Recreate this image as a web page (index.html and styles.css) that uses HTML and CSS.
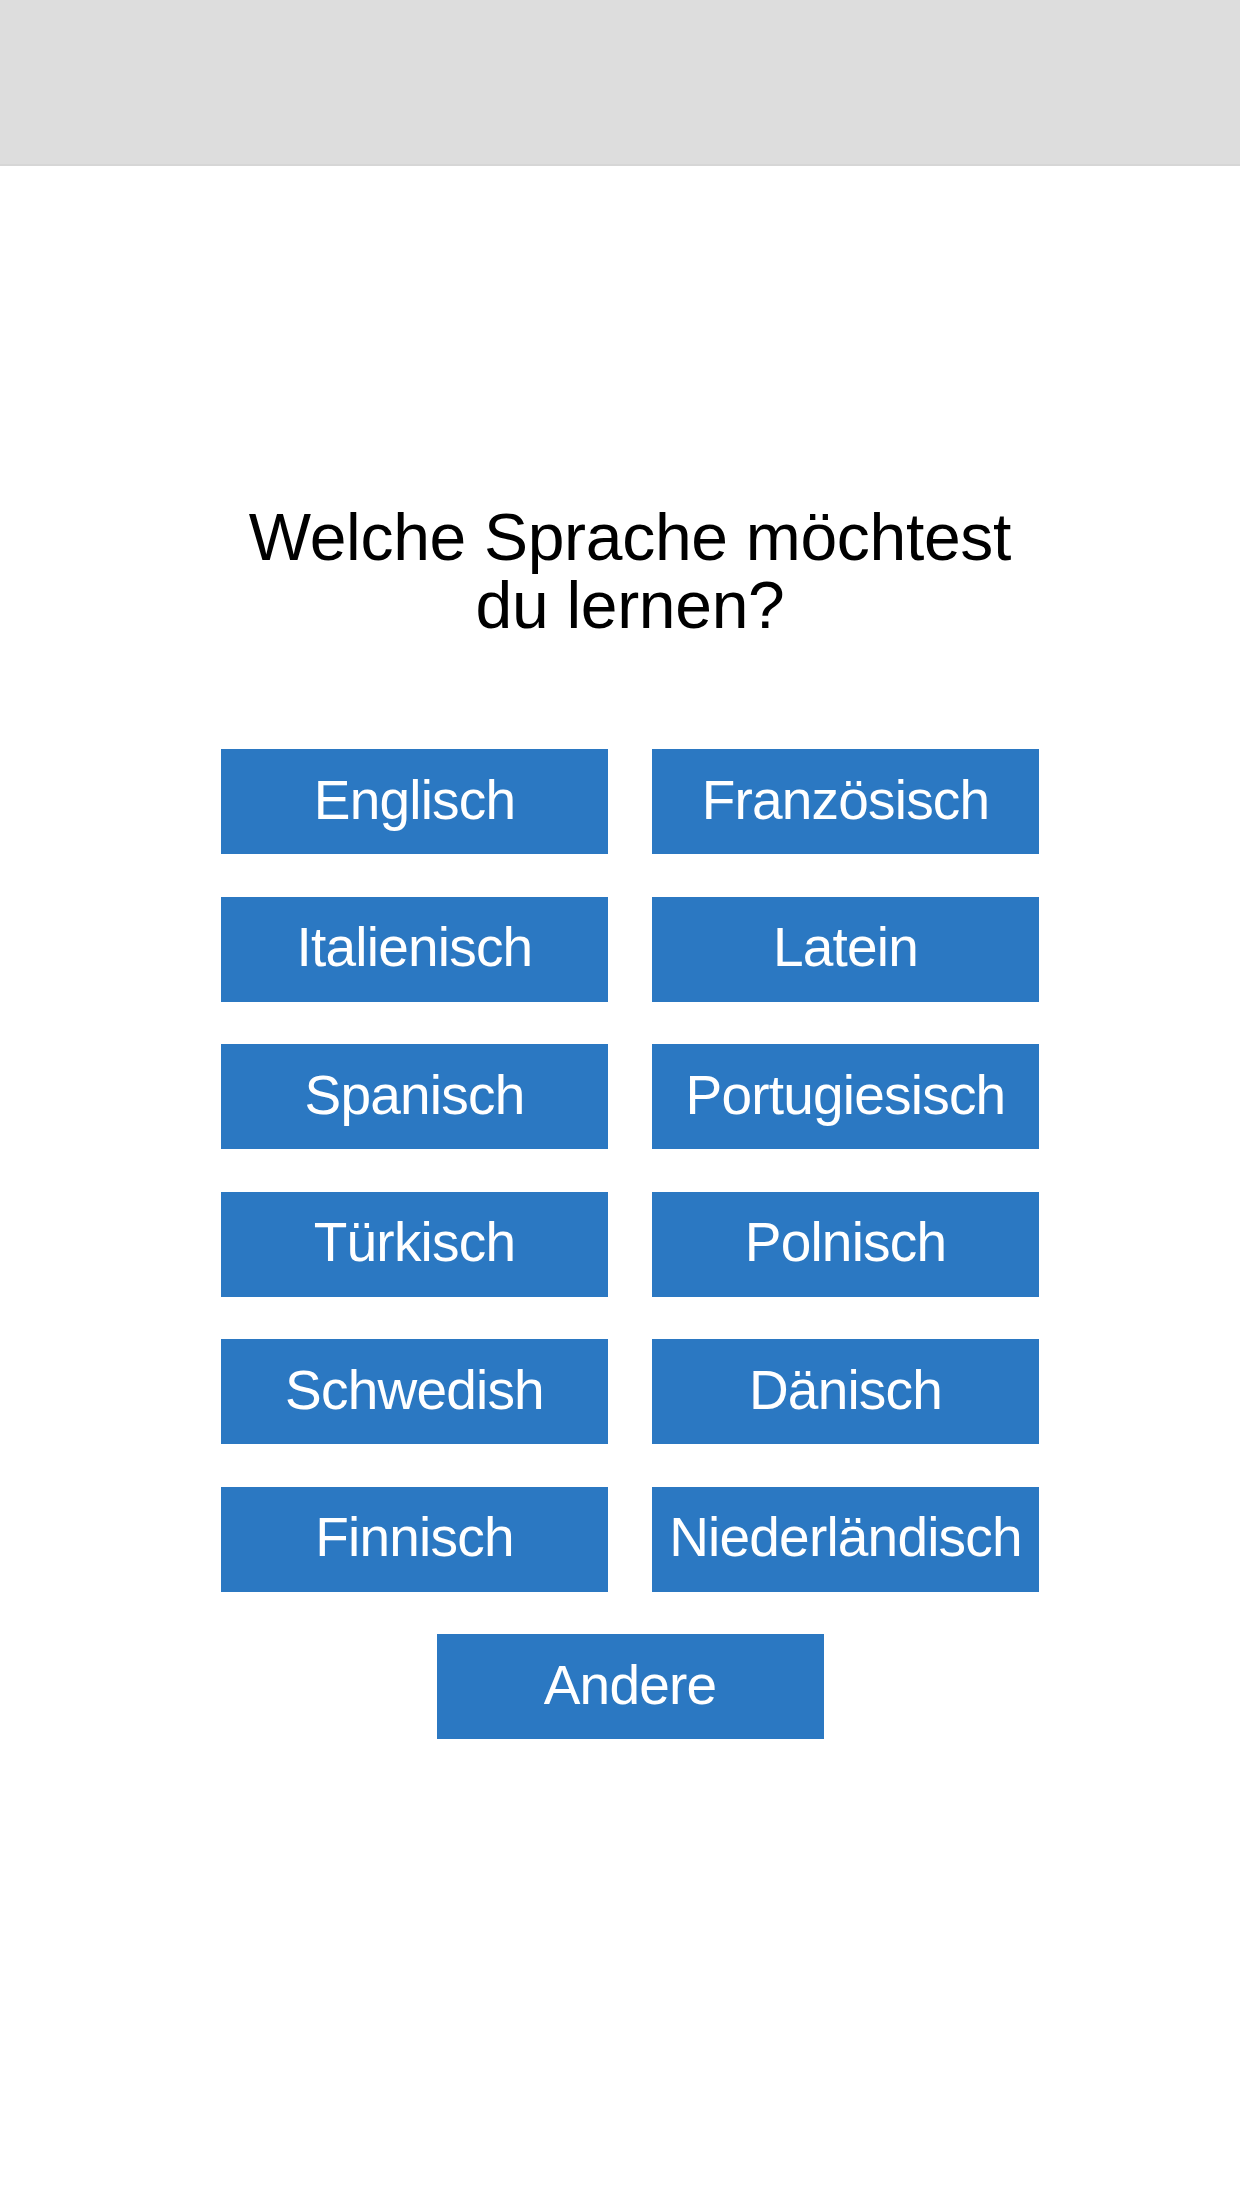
FILE: index.html
```html
<!DOCTYPE html>
<html lang="de">
<head>
<meta charset="utf-8">
<title>Sprache wählen</title>
<link rel="stylesheet" href="styles.css">
</head>
<body>
<header class="topbar"></header>
<main class="content">
  <h1 class="title">Welche Sprache möchtest<br>du lernen?</h1>
  <div class="choices">
    <button class="choice">Englisch</button>
    <button class="choice">Französisch</button>
    <button class="choice">Italienisch</button>
    <button class="choice">Latein</button>
    <button class="choice">Spanisch</button>
    <button class="choice">Portugiesisch</button>
    <button class="choice">Türkisch</button>
    <button class="choice">Polnisch</button>
    <button class="choice">Schwedish</button>
    <button class="choice">Dänisch</button>
    <button class="choice">Finnisch</button>
    <button class="choice">Niederländisch</button>
    <button class="choice choice-wide">Andere</button>
  </div>
</main>
</body>
</html>
```
FILE: styles.css
```css
html, body {
  margin: 0;
  padding: 0;
  background: #ffffff;
}
body {
  width: 1242px;
  min-height: 2208px;
  font-family: "Liberation Sans", Arial, sans-serif;
}
.topbar {
  height: 164px;
  background: #dddddd;
  border-bottom: 2px solid #d6d6d6;
  margin-right: 2px;
}
.content {
  display: flex;
  flex-direction: column;
  align-items: center;
  padding-left: 18px;
  padding-top: 337px;
}
.title {
  margin: 0;
  font-weight: normal;
  font-size: 66px;
  line-height: 68px;
  color: #000000;
  text-align: center;
  letter-spacing: -0.3px;
}
.choices {
  margin-top: 110px;
  display: grid;
  grid-template-columns: 387px 387px;
  grid-auto-rows: 105px;
  column-gap: 44px;
  row-gap: 42.5px;
}
.choice {
  margin: 0;
  padding: 0;
  border: none;
  background: #2b78c2;
  color: #ffffff;
  font-family: "Liberation Sans", Arial, sans-serif;
  font-size: 55px;
  letter-spacing: -0.8px;
  display: flex;
  align-items: center;
  justify-content: center;
  padding-bottom: 4px;
}
.choice-wide {
  grid-column: 1 / -1;
  justify-self: center;
  width: 387px;
}
```
